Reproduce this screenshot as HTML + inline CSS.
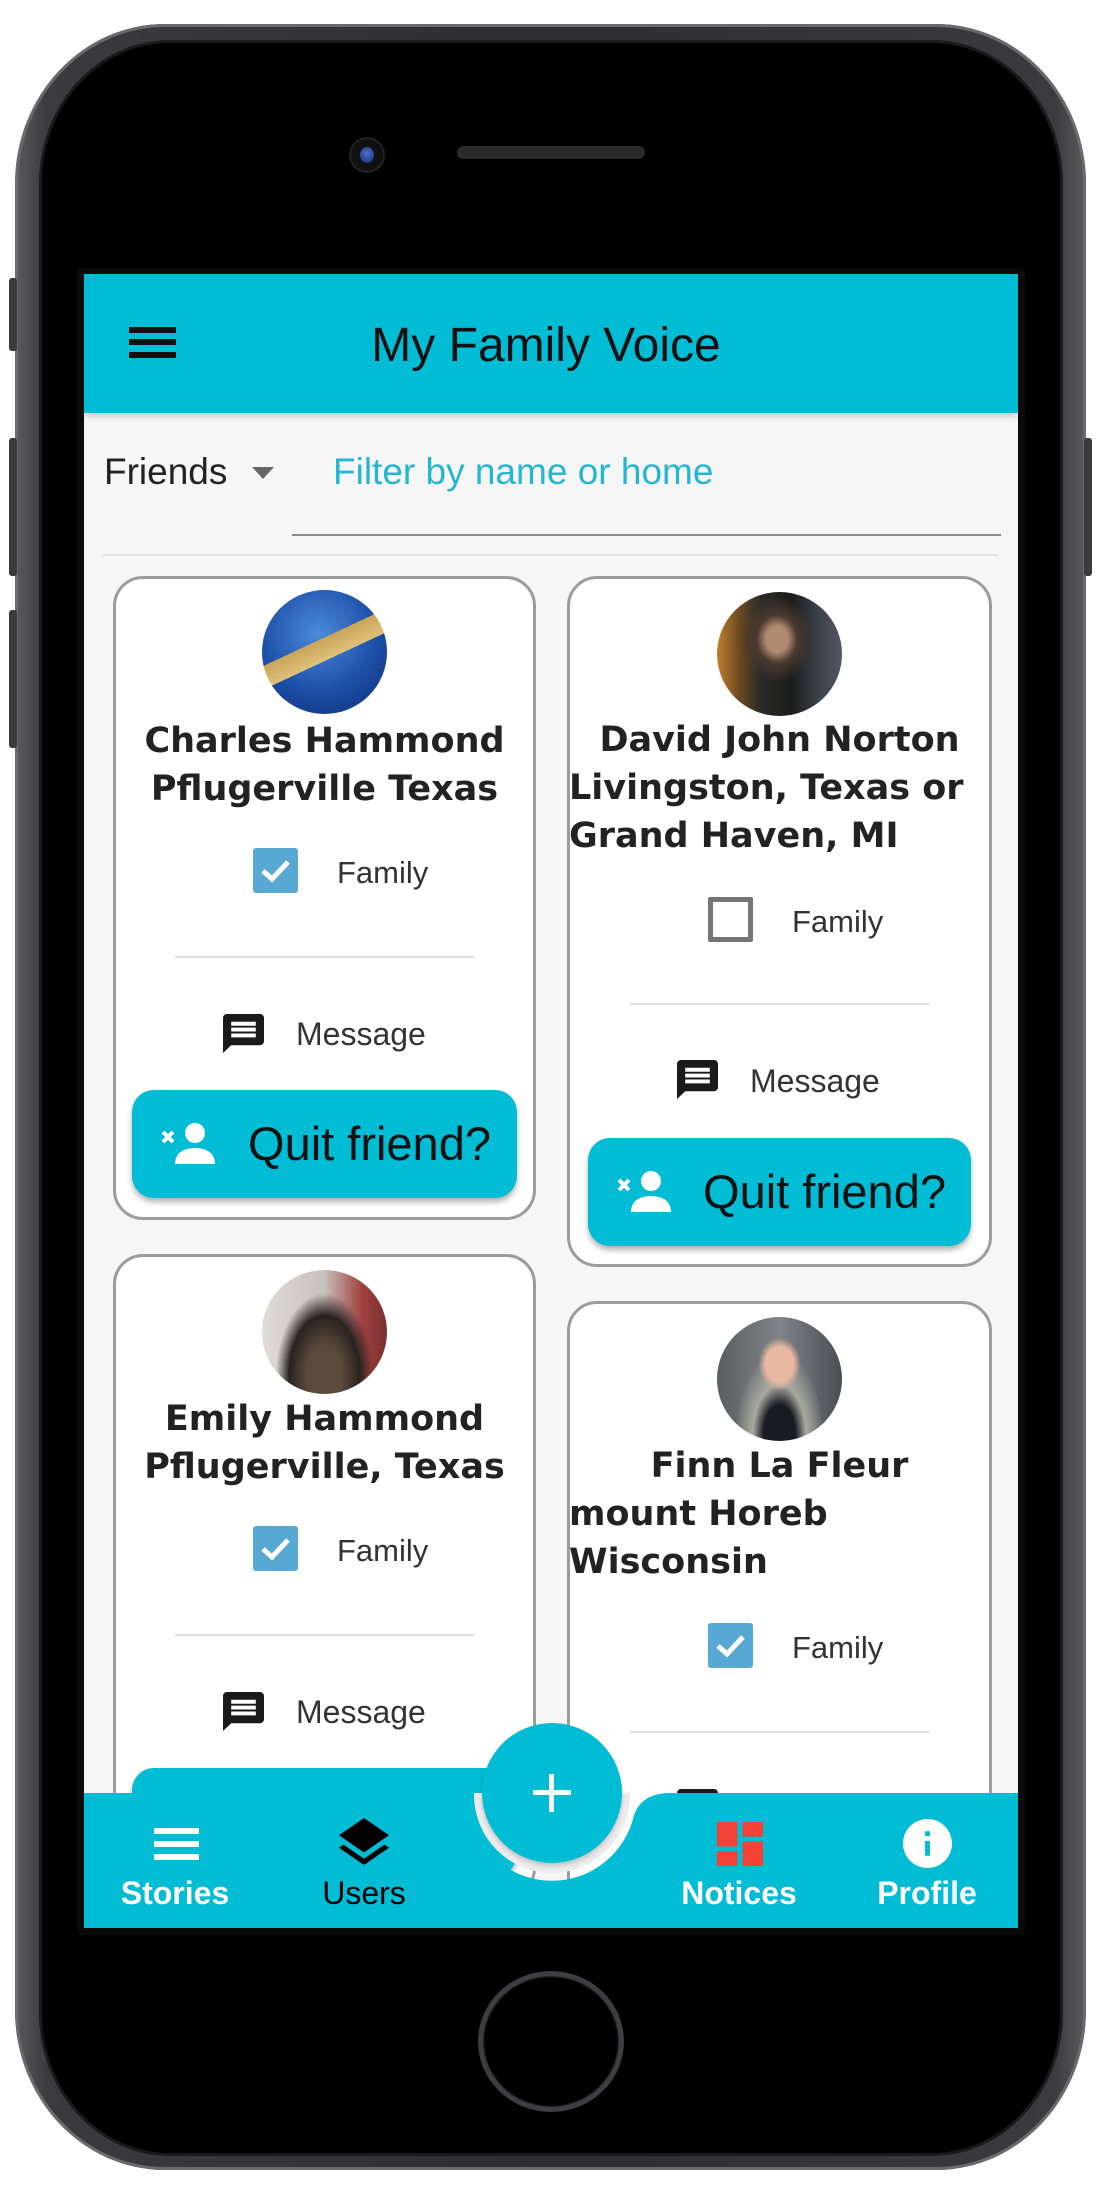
<!DOCTYPE html>
<html><head><meta charset="utf-8"><style>
*{margin:0;padding:0;box-sizing:border-box}
body{width:1102px;height:2208px;background:#fff;position:relative;overflow:hidden;font-family:"Liberation Sans",sans-serif}
.abs{position:absolute}
.body{left:15px;top:24px;width:1071px;height:2146px;border-radius:150px/160px;background:linear-gradient(90deg,#5a5a5c,#3b3b3d 3%,#2e2e30 50%,#3b3b3d 97%,#5a5a5c);box-shadow:inset 0 0 0 3px #6a6a6c}
.inner{left:42px;top:43px;width:1018px;height:2110px;border-radius:128px/140px;background:#000;box-shadow:0 0 0 3px #1a1a1a}
.btn{background:#3a3a3c;border-radius:3px}
.screen{left:84px;top:274px;width:934px;height:1654px;overflow:hidden;background:#f6f6f6}
.card{position:absolute;background:#fff;border-radius:30px}
.card::after{content:"";position:absolute;inset:0;border:3px solid #9c9c9c;border-radius:30px;pointer-events:none}
.av{position:absolute;width:125px;height:124px;border-radius:50%}
.nm{position:absolute;left:0;width:100%;text-align:center;font-family:"DejaVu Sans",sans-serif;font-weight:bold;font-size:35px;line-height:48px;color:#222;white-space:nowrap}
.hm{position:absolute;left:2px;font-family:"DejaVu Sans",sans-serif;font-weight:bold;font-size:35px;line-height:48px;color:#222;white-space:nowrap}
.cb{position:absolute;width:45px;height:45px;border-radius:3px;background:#57a8d3}
.cbu{position:absolute;width:45px;height:45px;border:5px solid #757575;border-radius:2px}
.fam{position:absolute;font-size:31px;line-height:31px;color:#333}
.dv{position:absolute;height:2px;background:#dedede;width:299px}
.mi{position:absolute;width:41px;height:39px}
.mt{position:absolute;font-size:32px;line-height:32px;color:#333}
.qb{position:absolute;height:108px;border-radius:22px;background:#00bcd4;box-shadow:0 4px 6px rgba(0,0,0,.3)}
.qb svg{position:absolute;left:29px;top:32px}
.qb span{position:absolute;left:90px;right:0;top:28px;text-align:center;font-size:47px;line-height:52px;color:#111}
.nl{position:absolute;top:85px;font-size:32px;line-height:32px;text-align:center;width:160px;font-weight:bold;color:#fff}
</style></head><body>
<div class="abs body"></div>
<div class="abs btn" style="left:9px;top:278px;width:8px;height:73px"></div>
<div class="abs btn" style="left:9px;top:438px;width:8px;height:138px"></div>
<div class="abs btn" style="left:9px;top:610px;width:8px;height:138px"></div>
<div class="abs btn" style="left:1084px;top:438px;width:8px;height:138px"></div>
<div class="abs inner"></div>
<div class="abs" style="left:351px;top:139px;width:32px;height:32px;border-radius:50%;background:#111;box-shadow:0 0 0 2px #222"></div>
<div class="abs" style="left:360px;top:147px;width:14px;height:16px;border-radius:50%;background:radial-gradient(circle at 50% 40%,#4b6fd0,#142a70)"></div>
<div class="abs" style="left:457px;top:146px;width:188px;height:13px;border-radius:7px;background:#2b2b2b"></div>
<div class="abs" style="left:478px;top:1971px;width:146px;height:141px;border-radius:50%;border:5px solid #3e3e40;box-shadow:inset 0 0 2px #666"></div>
<div class="abs" style="left:77px;top:268px;width:948px;height:1667px;background:#0a0a0a;border-radius:6px"></div>

<div class="abs screen">
  <div class="abs" style="left:0;top:0;width:934px;height:139px;background:#00bcd4;box-shadow:0 3px 6px rgba(0,0,0,.2)"></div>
  <div class="abs" style="left:45px;top:53px;width:47px;height:6px;background:#111"></div>
  <div class="abs" style="left:45px;top:65px;width:47px;height:6px;background:#111"></div>
  <div class="abs" style="left:45px;top:78px;width:47px;height:6px;background:#111"></div>
  <div class="abs" style="left:0;width:934px;top:47px;text-align:center;font-size:48px;line-height:50px;color:#111;padding-right:10px">My Family Voice</div>
  <div class="abs" style="left:20px;top:179px;font-size:37px;line-height:38px;color:#222">Friends</div>
  <div class="abs" style="left:168px;top:193px;width:0;height:0;border-left:11px solid transparent;border-right:11px solid transparent;border-top:12px solid #666"></div>
  <div class="abs" style="left:249px;top:179px;font-size:37px;line-height:38px;color:#26b6ce">Filter by name or home</div>
  <div class="abs" style="left:208px;top:260px;width:709px;height:2px;background:#8a8a8a"></div>
  <div class="abs" style="left:19px;top:280px;width:895px;height:2px;background:#e2e2e2"></div>

  <div class="card" style="left:29px;top:302px;width:423px;height:644px">
    <div class="av" style="left:149px;top:14px;background:linear-gradient(155deg,transparent 42%,#c9a35a 42%,#e0c27a 55%,transparent 55%),radial-gradient(circle at 45% 35%,#4d8ad8,#1c4fa8 55%,#102c70)"></div>
    <div class="nm" style="top:141px">Charles Hammond</div>
    <div class="nm" style="top:189px">Pflugerville Texas</div>
    <div class="cb" style="left:140px;top:272px"><svg width="45" height="45" viewBox="0 0 45 45"><path d="M10 23 L19 31 L35 14" fill="none" stroke="#fff" stroke-width="5"/></svg></div>
    <div class="fam" style="left:224px;top:281px">Family</div>
    <div class="dv" style="left:62px;top:380px"></div>
    <svg class="mi" style="left:110px;top:438px" viewBox="2 2 20 20" preserveAspectRatio="none"><path fill="#1a1a1a" d="M20 2H4c-1.1 0-1.99.9-1.990 2L2 22l4-4h14c1.1 0 2-.9 2-2V4c0-1.1-.9-2-2-2zm-2 12H6v-2h12v2zm0-3H6V9h12v2zm0-3H6V6h12v2z"/></svg>
    <div class="mt" style="left:183px;top:442px">Message</div>
    <div class="qb" style="left:19px;top:514px;width:385px"><svg width="56" height="42" viewBox="0 0 56 42"><path d="M2 10 L12 20 M12 10 L2 20" stroke="#fff" stroke-width="4"/><circle cx="34" cy="11" r="10" fill="#fff"/><path d="M14 42 C14 30 24 26 34 26 C44 26 54 30 54 42 Z" fill="#fff"/></svg><span>Quit friend?</span></div>
  </div>

  <div class="card" style="left:483px;top:302px;width:425px;height:691px">
    <div class="av" style="left:150px;top:16px;background:radial-gradient(ellipse at 48% 38%,#b08a70 0 12%,#4a3a30 22%,transparent 40%),linear-gradient(90deg,#c08030 0,#6a4a20 18%,#2a2a28 35%,#1c1c1c 60%,#3a4048 80%,#556 100%)"></div>
    <div class="nm" style="top:140px">David John Norton</div>
    <div class="hm" style="top:188px">Livingston, Texas or</div>
    <div class="hm" style="top:236px">Grand Haven, MI</div>
    <div class="cbu" style="left:141px;top:321px"></div>
    <div class="fam" style="left:225px;top:330px">Family</div>
    <div class="dv" style="left:63px;top:427px"></div>
    <svg class="mi" style="left:110px;top:484px" viewBox="2 2 20 20" preserveAspectRatio="none"><path fill="#1a1a1a" d="M20 2H4c-1.1 0-1.99.9-1.99 2L2 22l4-4h14c1.1 0 2-.9 2-2V4c0-1.1-.9-2-2-2zm-2 12H6v-2h12v2zm0-3H6V9h12v2zm0-3H6V6h12v2z"/></svg>
    <div class="mt" style="left:183px;top:489px">Message</div>
    <div class="qb" style="left:21px;top:562px;width:383px"><svg width="56" height="42" viewBox="0 0 56 42"><path d="M2 10 L12 20 M12 10 L2 20" stroke="#fff" stroke-width="4"/><circle cx="34" cy="11" r="10" fill="#fff"/><path d="M14 42 C14 30 24 26 34 26 C44 26 54 30 54 42 Z" fill="#fff"/></svg><span>Quit friend?</span></div>
  </div>

  <div class="card" style="left:29px;top:980px;width:423px;height:644px">
    <div class="av" style="left:149px;top:16px;background:radial-gradient(ellipse at 50% 85%,#5a4a3a 0 20%,#2a2220 40%,transparent 55%),linear-gradient(90deg,#e0dcd8,#c8c0bc 50%,#a04040 80%,#7a3030)"></div>
    <div class="nm" style="top:141px">Emily Hammond</div>
    <div class="nm" style="top:189px">Pflugerville, Texas</div>
    <div class="cb" style="left:140px;top:272px"><svg width="45" height="45" viewBox="0 0 45 45"><path d="M10 23 L19 31 L35 14" fill="none" stroke="#fff" stroke-width="5"/></svg></div>
    <div class="fam" style="left:224px;top:281px">Family</div>
    <div class="dv" style="left:62px;top:380px"></div>
    <svg class="mi" style="left:110px;top:438px" viewBox="2 2 20 20" preserveAspectRatio="none"><path fill="#1a1a1a" d="M20 2H4c-1.1 0-1.99.9-1.99 2L2 22l4-4h14c1.1 0 2-.9 2-2V4c0-1.1-.9-2-2-2zm-2 12H6v-2h12v2zm0-3H6V9h12v2zm0-3H6V6h12v2z"/></svg>
    <div class="mt" style="left:183px;top:442px">Message</div>
    <div class="qb" style="left:19px;top:514px;width:385px"></div>
  </div>

  <div class="card" style="left:483px;top:1027px;width:425px;height:720px">
    <div class="av" style="left:150px;top:16px;background:radial-gradient(ellipse at 50% 38%,#e8b8a0 0 16%,transparent 24%),radial-gradient(ellipse at 50% 95%,#1a1a22 0 18%,#a8a8a0 30%,transparent 50%),linear-gradient(90deg,#5a5e60,#808488 50%,#4a4e52)"></div>
    <div class="nm" style="top:141px">Finn La Fleur</div>
    <div class="hm" style="top:189px">mount Horeb</div>
    <div class="hm" style="top:237px">Wisconsin</div>
    <div class="cb" style="left:141px;top:322px"><svg width="45" height="45" viewBox="0 0 45 45"><path d="M10 23 L19 31 L35 14" fill="none" stroke="#fff" stroke-width="5"/></svg></div>
    <div class="fam" style="left:225px;top:331px">Family</div>
    <div class="dv" style="left:63px;top:430px"></div>
    <svg class="mi" style="left:110px;top:488px" viewBox="2 2 20 20" preserveAspectRatio="none"><path fill="#1a1a1a" d="M20 2H4c-1.1 0-1.99.9-1.99 2L2 22l4-4h14c1.1 0 2-.9 2-2V4c0-1.1-.9-2-2-2zm-2 12H6v-2h12v2zm0-3H6V9h12v2zm0-3H6V6h12v2z"/></svg>
  </div>

  <!-- nav -->
  <svg class="abs" style="left:0;top:1519px" width="934" height="136" viewBox="0 0 934 136">
    <circle cx="468" cy="2" r="78" fill="#ececec"/>
    <path d="M0 0 H350 Q378 0 386 22 A84 84 0 0 0 550 22 Q558 0 586 0 H934 V136 H0 Z" fill="#00bcd4"/>
  </svg>
  <div class="abs" style="left:398px;top:1449px;width:140px;height:140px;border-radius:50%;background:#00bcd4;box-shadow:0 3px 5px rgba(0,0,0,.18)"></div>
  <div class="abs" style="left:465px;top:1500px;width:5px;height:38px;background:#fff"></div>
  <div class="abs" style="left:449px;top:1516px;width:38px;height:5px;background:#fff"></div>

  <div class="abs" style="left:0;top:1518px;width:934px;height:136px">
    <div class="abs" style="left:70px;top:36px;width:45px;height:6px;background:#fff"></div>
    <div class="abs" style="left:70px;top:49px;width:45px;height:6px;background:#fff"></div>
    <div class="abs" style="left:70px;top:62px;width:45px;height:6px;background:#fff"></div>
    <div class="nl" style="left:11px">Stories</div>
    <svg class="abs" style="left:255px;top:26px" width="50" height="48" viewBox="3 2 18 19.5" preserveAspectRatio="none"><path fill="#000" d="M11.99 18.54l-7.37-5.73L3 14.07l9 7 9-7-1.63-1.27-7.38 5.740zM12 16l7.36-5.73L21 9l-9-7-9 7 1.63 1.27L12 16z"/></svg>
    <div class="nl" style="left:200px;font-weight:normal;color:#000">Users</div>
    <svg class="abs" style="left:633px;top:30px" width="46" height="44" viewBox="3 3 18 18" preserveAspectRatio="none"><path fill="#f44336" d="M3 13h8V3H3v10zm0 8h8v-6H3v6zm10 0h8V11h-8v10zm0-18v6h8V3h-8z"/></svg>
    <div class="nl" style="left:575px">Notices</div>
    <svg class="abs" style="left:819px;top:27px" width="49" height="49" viewBox="2 2 20 20" preserveAspectRatio="none"><path fill="#fff" d="M12 2C6.48 2 2 6.48 2 12s4.480 10 10 10 10-4.48 10-10S17.52 2 12 2zm1 15h-2v-6h2v6zm0-8h-2V7h2v2z"/></svg>
    <div class="nl" style="left:763px">Profile</div>
  </div>
</div>
</body></html>
